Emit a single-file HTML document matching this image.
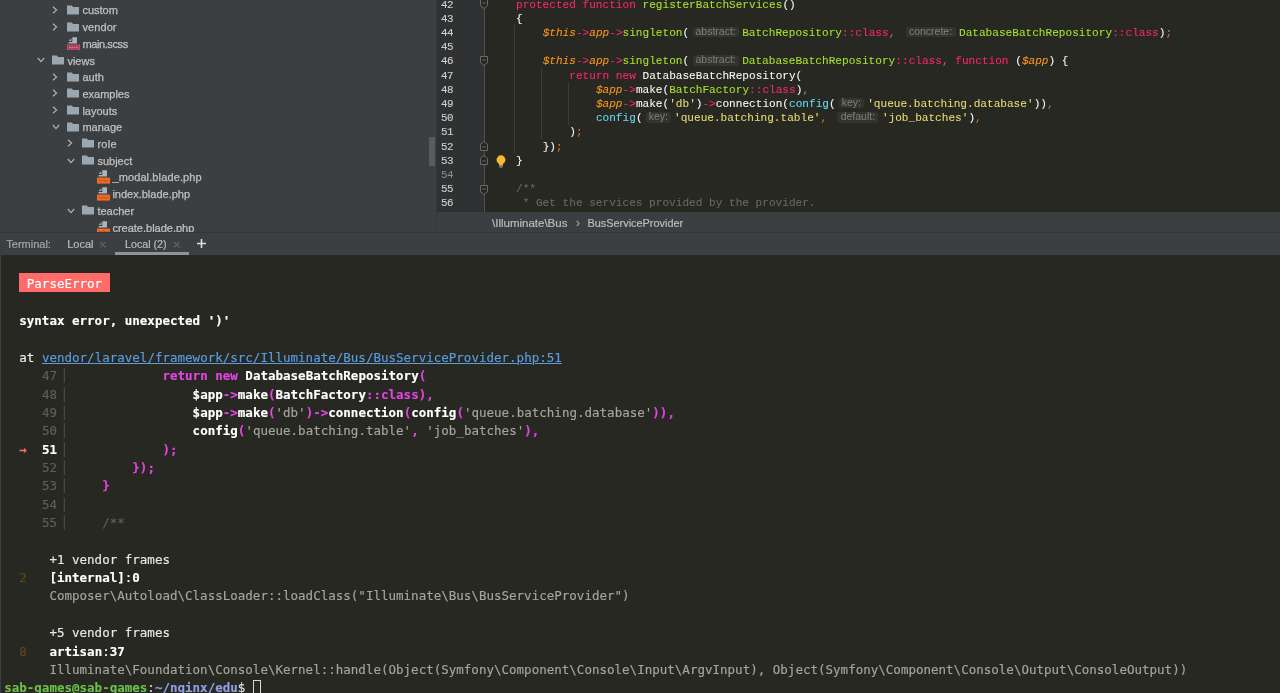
<!DOCTYPE html><html><head><meta charset="utf-8"><title>PhpStorm</title><style>
html,body{margin:0;padding:0;}
body{width:1280px;height:693px;overflow:hidden;position:relative;background:#272822;font-family:"Liberation Sans",sans-serif;}
.abs{position:absolute;}
#root{position:absolute;left:0;top:0;width:1280px;height:693px;will-change:transform;overflow:hidden;}
#sidebar{left:0;top:0;width:436px;height:232px;background:#3c3f41;overflow:hidden;}
.row{position:absolute;left:0;height:17px;line-height:17px;font-size:11px;color:#c0c0c0;white-space:nowrap;-webkit-text-stroke:0.25px #c0c0c0;}
.row span{position:absolute;top:1.2px;}
.ico{position:absolute;}
#editor{left:436px;top:0;width:844px;height:212px;background:#272822;overflow:hidden;}
#gutter{left:0;top:0;width:48px;height:212px;background:#303132;}
.ln{position:absolute;left:5.2px;width:14px;font-family:"Liberation Mono",monospace;font-size:11.8px;letter-spacing:-0.5px;transform:scaleX(0.92);transform-origin:0 0;color:#cfcfcb;-webkit-text-stroke:0.12px #cfcfcb;white-space:pre;line-height:14.2px;height:14.2px;}
.cl{position:absolute;left:0;font-family:"Liberation Mono",monospace;font-size:11.1px;white-space:pre;line-height:14.2px;height:14.2px;color:#f8f8f2;-webkit-text-stroke:0.08px;}
.cl span.t{position:absolute;top:0;}
.hint{position:absolute;top:0.9px;height:10.6px;line-height:9.4px;border-radius:3px;background:#33342e;color:#7c7d77;font-family:"Liberation Sans",sans-serif;font-size:10.5px;text-align:center;}
.k{color:#f92672}.g{color:#a6e22e}.o{color:#fd971f;font-style:italic}.w{color:#f8f8f2}.y{color:#e6db74}.c{color:#66d9ef}.p{color:#cc7832}.cm{color:#6d6a58}
#crumbs{left:436px;top:212px;width:844px;height:20px;background:#3c3f41;font-size:11px;color:#bbbbbb;}
#crumbs span{position:absolute;top:0.7px;line-height:20px;white-space:nowrap;-webkit-text-stroke:0.2px;}
#thead{left:0;top:232px;width:1280px;height:22.5px;background:#3c3f41;font-size:11px;color:#bbbbbb;border-top:1px solid #323537;box-sizing:border-box;}
#thead span{position:absolute;top:0.7px;line-height:21px;white-space:nowrap;-webkit-text-stroke:0.2px;}
#term{left:0;top:254.5px;width:1280px;height:438.5px;background:#272822;overflow:hidden;}
.tl{position:absolute;left:4.2px;font-family:"DejaVu Sans Mono","Liberation Mono",monospace;font-size:12.5px;letter-spacing:0.0095px;-webkit-text-stroke:0.15px;line-height:18.36px;height:18.36px;white-space:pre;color:#dcdcdc;}
.tl b{font-weight:bold;}
.m{color:#e345e3;font-weight:bold}.tw{color:#ffffff;font-weight:bold}.dim{color:#5f5f5a}.dv{color:#4d4d49}.gr{color:#a5a5a0}
</style></head><body><div id="root">
<div id="sidebar" class="abs">
<div class="row" style="top:1.3px">
<svg class="ico" style="left:52.4px;top:4.6px" width="6" height="8" viewBox="0 0 6 8"><path d="M1 0.8L4.6 4L1 7.2" fill="none" stroke="#afb1b3" stroke-width="1.2"/></svg>
<svg class="ico" style="left:66.8px;top:3.5px" width="12" height="10" viewBox="0 0 12 10"><path d="M0 0.4h4.8l1.3 1.5h5.9v7.5H0z" fill="#9aa7b0"/></svg>
<span style="left:82.4px;letter-spacing:0px">custom</span>
</div>
<div class="row" style="top:18px">
<svg class="ico" style="left:52.4px;top:4.6px" width="6" height="8" viewBox="0 0 6 8"><path d="M1 0.8L4.6 4L1 7.2" fill="none" stroke="#afb1b3" stroke-width="1.2"/></svg>
<svg class="ico" style="left:66.8px;top:3.5px" width="12" height="10" viewBox="0 0 12 10"><path d="M0 0.4h4.8l1.3 1.5h5.9v7.5H0z" fill="#9aa7b0"/></svg>
<span style="left:82.4px;letter-spacing:0.1px">vendor</span>
</div>
<div class="row" style="top:34.7px">
<svg class="ico" style="left:66.7px;top:2.2px" width="13.2" height="13.6" viewBox="0 0 13.2 13.6"><path d="M5.3 0.3H10V6.6H1.6V5H5.3z" fill="#a9b5bd"/><path d="M1.7 4L4.4 1.2V4z" fill="#a9b5bd"/><rect x="0" y="7.6" width="13" height="5.8" fill="#c8607a"/><rect x="0.8" y="8.4" width="11.4" height="4.2" fill="#a8324f"/><path d="M2 10.5H11" stroke="#d98a9c" stroke-width="1.6" stroke-dasharray="1.6 0.8"/></svg>
<span style="left:82.4px;letter-spacing:-0.39px">main.scss</span>
</div>
<div class="row" style="top:51.4px">
<svg class="ico" style="left:36.5px;top:6px" width="8" height="6" viewBox="0 0 8 6"><path d="M0.8 1L4 4.6L7.2 1" fill="none" stroke="#afb1b3" stroke-width="1.2"/></svg>
<svg class="ico" style="left:51.8px;top:3.5px" width="12" height="10" viewBox="0 0 12 10"><path d="M0 0.4h4.8l1.3 1.5h5.9v7.5H0z" fill="#9aa7b0"/></svg>
<span style="left:67.4px;letter-spacing:0px">views</span>
</div>
<div class="row" style="top:68.1px">
<svg class="ico" style="left:52.4px;top:4.6px" width="6" height="8" viewBox="0 0 6 8"><path d="M1 0.8L4.6 4L1 7.2" fill="none" stroke="#afb1b3" stroke-width="1.2"/></svg>
<svg class="ico" style="left:66.8px;top:3.5px" width="12" height="10" viewBox="0 0 12 10"><path d="M0 0.4h4.8l1.3 1.5h5.9v7.5H0z" fill="#9aa7b0"/></svg>
<span style="left:82.4px;letter-spacing:0px">auth</span>
</div>
<div class="row" style="top:84.8px">
<svg class="ico" style="left:52.4px;top:4.6px" width="6" height="8" viewBox="0 0 6 8"><path d="M1 0.8L4.6 4L1 7.2" fill="none" stroke="#afb1b3" stroke-width="1.2"/></svg>
<svg class="ico" style="left:66.8px;top:3.5px" width="12" height="10" viewBox="0 0 12 10"><path d="M0 0.4h4.8l1.3 1.5h5.9v7.5H0z" fill="#9aa7b0"/></svg>
<span style="left:82.4px;letter-spacing:0px">examples</span>
</div>
<div class="row" style="top:101.5px">
<svg class="ico" style="left:52.4px;top:4.6px" width="6" height="8" viewBox="0 0 6 8"><path d="M1 0.8L4.6 4L1 7.2" fill="none" stroke="#afb1b3" stroke-width="1.2"/></svg>
<svg class="ico" style="left:66.8px;top:3.5px" width="12" height="10" viewBox="0 0 12 10"><path d="M0 0.4h4.8l1.3 1.5h5.9v7.5H0z" fill="#9aa7b0"/></svg>
<span style="left:82.4px;letter-spacing:0px">layouts</span>
</div>
<div class="row" style="top:118.2px">
<svg class="ico" style="left:51.5px;top:6px" width="8" height="6" viewBox="0 0 8 6"><path d="M0.8 1L4 4.6L7.2 1" fill="none" stroke="#afb1b3" stroke-width="1.2"/></svg>
<svg class="ico" style="left:66.8px;top:3.5px" width="12" height="10" viewBox="0 0 12 10"><path d="M0 0.4h4.8l1.3 1.5h5.9v7.5H0z" fill="#9aa7b0"/></svg>
<span style="left:82.4px;letter-spacing:0px">manage</span>
</div>
<div class="row" style="top:134.9px">
<svg class="ico" style="left:67.4px;top:4.6px" width="6" height="8" viewBox="0 0 6 8"><path d="M1 0.8L4.6 4L1 7.2" fill="none" stroke="#afb1b3" stroke-width="1.2"/></svg>
<svg class="ico" style="left:81.8px;top:3.5px" width="12" height="10" viewBox="0 0 12 10"><path d="M0 0.4h4.8l1.3 1.5h5.9v7.5H0z" fill="#9aa7b0"/></svg>
<span style="left:97.4px;letter-spacing:0.3px">role</span>
</div>
<div class="row" style="top:151.6px">
<svg class="ico" style="left:66.5px;top:6px" width="8" height="6" viewBox="0 0 8 6"><path d="M0.8 1L4 4.6L7.2 1" fill="none" stroke="#afb1b3" stroke-width="1.2"/></svg>
<svg class="ico" style="left:81.8px;top:3.5px" width="12" height="10" viewBox="0 0 12 10"><path d="M0 0.4h4.8l1.3 1.5h5.9v7.5H0z" fill="#9aa7b0"/></svg>
<span style="left:97.4px;letter-spacing:0px">subject</span>
</div>
<div class="row" style="top:168.3px">
<svg class="ico" style="left:96.7px;top:2.2px" width="13.2" height="13.6" viewBox="0 0 13.2 13.6"><path d="M5.3 0.3H10V6.6H1.6V5H5.3z" fill="#a9b5bd"/><path d="M1.7 4L4.4 1.2V4z" fill="#a9b5bd"/><rect x="0" y="7.6" width="13.2" height="6" fill="#f26b24"/><path d="M1.5 9.6l3 1.8l2-1.6l3 1.6l2-1.4" fill="none" stroke="#b8431a" stroke-width="0.9"/></svg>
<span style="left:112.4px;letter-spacing:0.12px">_modal.blade.php</span>
</div>
<div class="row" style="top:185px">
<svg class="ico" style="left:96.7px;top:2.2px" width="13.2" height="13.6" viewBox="0 0 13.2 13.6"><path d="M5.3 0.3H10V6.6H1.6V5H5.3z" fill="#a9b5bd"/><path d="M1.7 4L4.4 1.2V4z" fill="#a9b5bd"/><rect x="0" y="7.6" width="13.2" height="6" fill="#f26b24"/><path d="M1.5 9.6l3 1.8l2-1.6l3 1.6l2-1.4" fill="none" stroke="#b8431a" stroke-width="0.9"/></svg>
<span style="left:112.4px;letter-spacing:0px">index.blade.php</span>
</div>
<div class="row" style="top:201.7px">
<svg class="ico" style="left:66.5px;top:6px" width="8" height="6" viewBox="0 0 8 6"><path d="M0.8 1L4 4.6L7.2 1" fill="none" stroke="#afb1b3" stroke-width="1.2"/></svg>
<svg class="ico" style="left:81.8px;top:3.5px" width="12" height="10" viewBox="0 0 12 10"><path d="M0 0.4h4.8l1.3 1.5h5.9v7.5H0z" fill="#9aa7b0"/></svg>
<span style="left:97.4px;letter-spacing:0px">teacher</span>
</div>
<div class="row" style="top:218.4px">
<svg class="ico" style="left:96.7px;top:2.2px" width="13.2" height="13.6" viewBox="0 0 13.2 13.6"><path d="M5.3 0.3H10V6.6H1.6V5H5.3z" fill="#a9b5bd"/><path d="M1.7 4L4.4 1.2V4z" fill="#a9b5bd"/><rect x="0" y="7.6" width="13.2" height="6" fill="#f26b24"/><path d="M1.5 9.6l3 1.8l2-1.6l3 1.6l2-1.4" fill="none" stroke="#b8431a" stroke-width="0.9"/></svg>
<span style="left:112.4px;letter-spacing:0px">create.blade.php</span>
</div>
<div class="abs" style="left:429px;top:137px;width:6px;height:29px;background:#595b5d;"></div>
</div>
<div id="editor" class="abs">
<div id="gutter" class="abs"></div>
<div class="abs" style="left:48px;top:0;width:1px;height:212px;background:#50514c;"></div>
<div class="abs" style="left:78px;top:25px;width:1px;height:128px;background:#3c3d38;"></div>
<div class="abs" style="left:105px;top:68px;width:1px;height:71px;background:#3c3d38;"></div>
<div class="abs" style="left:132px;top:82px;width:1px;height:43px;background:#3c3d38;"></div>
<div class="ln" style="top:-2.4px">42</div>
<div class="ln" style="top:11.793px">43</div>
<div class="ln" style="top:25.986px">44</div>
<div class="ln" style="top:40.179px">45</div>
<div class="ln" style="top:54.372px">46</div>
<div class="ln" style="top:68.565px">47</div>
<div class="ln" style="top:82.758px">48</div>
<div class="ln" style="top:96.951px">49</div>
<div class="ln" style="top:111.144px">50</div>
<div class="ln" style="top:125.337px">51</div>
<div class="ln" style="top:139.53px">52</div>
<div class="ln" style="top:153.723px">53</div>
<div class="ln" style="top:167.916px;color:#8e8f89;-webkit-text-stroke:0">54</div>
<div class="ln" style="top:182.109px">55</div>
<div class="ln" style="top:196.302px">56</div>
<div class="cl" style="top:-2.4px">
<span class="t k" style="left:80px;letter-spacing:-0.0011px">protected function </span>
<span class="t g" style="left:206.54px;letter-spacing:-0.0011px">registerBatchServices</span>
<span class="t w" style="left:346.4px;letter-spacing:-0.0011px">()</span>
</div>
<div class="cl" style="top:11.793px">
<span class="t w" style="left:80px;letter-spacing:-0.0011px">{</span>
</div>
<div class="cl" style="top:25.986px">
<span class="t o" style="left:106.64px;letter-spacing:-0.0011px">$this</span>
<span class="t k" style="left:139.94px;letter-spacing:-0.0011px">-&gt;</span>
<span class="t o" style="left:153.26px;letter-spacing:-0.0011px">app</span>
<span class="t k" style="left:173.24px;letter-spacing:-0.0011px">-&gt;</span>
<span class="t g" style="left:186.56px;letter-spacing:-0.0011px">singleton</span>
<span class="t w" style="left:246.5px;letter-spacing:-0.0011px">(</span>
<span class="hint" style="left:256.66px;width:46px">abstract:</span>
<span class="t g" style="left:306.16px;letter-spacing:-0.0011px">BatchRepository</span>
<span class="t k" style="left:406.06px;letter-spacing:-0.0011px">::class</span>
<span class="t p" style="left:452.68px;letter-spacing:-0.0011px">, </span>
<span class="hint" style="left:469.5px;width:50px">concrete:</span>
<span class="t g" style="left:523px;letter-spacing:-0.0011px">DatabaseBatchRepository</span>
<span class="t k" style="left:676.18px;letter-spacing:-0.0011px">::class</span>
<span class="t w" style="left:722.8px;letter-spacing:-0.0011px">)</span>
<span class="t p" style="left:729.46px;letter-spacing:-0.0011px">;</span>
</div>
<div class="cl" style="top:54.372px">
<span class="t o" style="left:106.64px;letter-spacing:-0.0011px">$this</span>
<span class="t k" style="left:139.94px;letter-spacing:-0.0011px">-&gt;</span>
<span class="t o" style="left:153.26px;letter-spacing:-0.0011px">app</span>
<span class="t k" style="left:173.24px;letter-spacing:-0.0011px">-&gt;</span>
<span class="t g" style="left:186.56px;letter-spacing:-0.0011px">singleton</span>
<span class="t w" style="left:246.5px;letter-spacing:-0.0011px">(</span>
<span class="hint" style="left:256.66px;width:46px">abstract:</span>
<span class="t g" style="left:306.16px;letter-spacing:-0.0011px">DatabaseBatchRepository</span>
<span class="t k" style="left:459.34px;letter-spacing:-0.0011px">::class</span>
<span class="t p" style="left:505.96px;letter-spacing:-0.0011px">, </span>
<span class="t k" style="left:519.28px;letter-spacing:-0.0011px">function </span>
<span class="t w" style="left:579.22px;letter-spacing:-0.0011px">(</span>
<span class="t o" style="left:585.88px;letter-spacing:-0.0011px">$app</span>
<span class="t w" style="left:612.52px;letter-spacing:-0.0011px">) {</span>
</div>
<div class="cl" style="top:68.565px">
<span class="t k" style="left:133.28px;letter-spacing:-0.0011px">return new </span>
<span class="t w" style="left:206.54px;letter-spacing:-0.0011px">DatabaseBatchRepository(</span>
</div>
<div class="cl" style="top:82.758px">
<span class="t o" style="left:159.92px;letter-spacing:-0.0011px">$app</span>
<span class="t k" style="left:186.56px;letter-spacing:-0.0011px">-&gt;</span>
<span class="t w" style="left:199.88px;letter-spacing:-0.0011px">make(</span>
<span class="t g" style="left:233.18px;letter-spacing:-0.0011px">BatchFactory</span>
<span class="t k" style="left:313.1px;letter-spacing:-0.0011px">::class</span>
<span class="t w" style="left:359.72px;letter-spacing:-0.0011px">)</span>
<span class="t p" style="left:366.38px;letter-spacing:-0.0011px">,</span>
</div>
<div class="cl" style="top:96.951px">
<span class="t o" style="left:159.92px;letter-spacing:-0.0011px">$app</span>
<span class="t k" style="left:186.56px;letter-spacing:-0.0011px">-&gt;</span>
<span class="t w" style="left:199.88px;letter-spacing:-0.0011px">make(</span>
<span class="t y" style="left:233.18px;letter-spacing:-0.0011px">&#x27;db&#x27;</span>
<span class="t w" style="left:259.82px;letter-spacing:-0.0011px">)</span>
<span class="t k" style="left:266.48px;letter-spacing:-0.0011px">-&gt;</span>
<span class="t w" style="left:279.8px;letter-spacing:-0.0011px">connection(</span>
<span class="t c" style="left:353.06px;letter-spacing:-0.0011px">config</span>
<span class="t w" style="left:393.02px;letter-spacing:-0.0011px">(</span>
<span class="hint" style="left:403.18px;width:24.5px">key:</span>
<span class="t y" style="left:431.18px;letter-spacing:-0.0011px">&#x27;queue.batching.database&#x27;</span>
<span class="t w" style="left:597.68px;letter-spacing:-0.0011px">))</span>
<span class="t p" style="left:611px;letter-spacing:-0.0011px">,</span>
</div>
<div class="cl" style="top:111.144px">
<span class="t c" style="left:159.92px;letter-spacing:-0.0011px">config</span>
<span class="t w" style="left:199.88px;letter-spacing:-0.0011px">(</span>
<span class="hint" style="left:210.04px;width:24.5px">key:</span>
<span class="t y" style="left:238.04px;letter-spacing:-0.0011px">&#x27;queue.batching.table&#x27;</span>
<span class="t p" style="left:384.56px;letter-spacing:-0.0011px">, </span>
<span class="hint" style="left:401.38px;width:41px">default:</span>
<span class="t y" style="left:445.88px;letter-spacing:-0.0011px">&#x27;job_batches&#x27;</span>
<span class="t w" style="left:532.46px;letter-spacing:-0.0011px">)</span>
<span class="t p" style="left:539.12px;letter-spacing:-0.0011px">,</span>
</div>
<div class="cl" style="top:125.337px">
<span class="t w" style="left:133.28px;letter-spacing:-0.0011px">)</span>
<span class="t p" style="left:139.94px;letter-spacing:-0.0011px">;</span>
</div>
<div class="cl" style="top:139.53px">
<span class="t w" style="left:106.64px;letter-spacing:-0.0011px">})</span>
<span class="t p" style="left:119.96px;letter-spacing:-0.0011px">;</span>
</div>
<div class="cl" style="top:153.723px">
<span class="t w" style="left:80px;letter-spacing:-0.0011px">}</span>
</div>
<div class="cl" style="top:182.109px">
<span class="t cm" style="left:80px;letter-spacing:-0.0011px">/**</span>
</div>
<div class="cl" style="top:196.302px">
<span class="t cm" style="left:80px;letter-spacing:-0.0011px"> * Get the services provided by the provider.</span>
</div>
<svg class="abs" style="left:44px;top:-1px" width="8" height="10" viewBox="0 0 8 10"><path d="M0.5 0.5H7.5V6.6L4 9.5L0.5 6.6z" fill="#272822" stroke="#696a65" stroke-width="1"/><path d="M2.3 4H5.7" stroke="#696a65" stroke-width="1"/></svg>
<svg class="abs" style="left:44px;top:55.7px" width="8" height="10" viewBox="0 0 8 10"><path d="M0.5 0.5H7.5V6.6L4 9.5L0.5 6.6z" fill="#272822" stroke="#696a65" stroke-width="1"/><path d="M2.3 4H5.7" stroke="#696a65" stroke-width="1"/></svg>
<svg class="abs" style="left:44px;top:140.9px" width="8" height="10" viewBox="0 0 8 10"><path d="M0.5 9.5H7.5V3.4L4 0.5L0.5 3.4z" fill="#272822" stroke="#696a65" stroke-width="1"/><path d="M2.3 6H5.7" stroke="#696a65" stroke-width="1"/></svg>
<svg class="abs" style="left:44px;top:154.9px" width="8" height="10" viewBox="0 0 8 10"><path d="M0.5 9.5H7.5V3.4L4 0.5L0.5 3.4z" fill="#272822" stroke="#696a65" stroke-width="1"/><path d="M2.3 6H5.7" stroke="#696a65" stroke-width="1"/></svg>
<svg class="abs" style="left:44px;top:185.2px" width="8" height="10" viewBox="0 0 8 10"><path d="M0.5 0.5H7.5V6.6L4 9.5L0.5 6.6z" fill="#272822" stroke="#696a65" stroke-width="1"/><path d="M2.3 4H5.7" stroke="#696a65" stroke-width="1"/></svg>
<svg class="abs" style="left:59.7px;top:154.7px" width="10" height="13" viewBox="0 0 10 13"><circle cx="5" cy="4.8" r="4.45" fill="#fbb634"/><rect x="3" y="8.5" width="4" height="1.6" fill="#fbb634"/><rect x="3" y="10.3" width="4" height="1.2" fill="#9aa7b0"/><rect x="3.6" y="11.6" width="2.8" height="0.9" fill="#9aa7b0"/></svg>
</div>
<div id="crumbs" class="abs">
<span style="left:56px;font-size:11.5px">\Illuminate\Bus</span>
<span style="left:140px;font-size:12px;color:#a0a2a4">&#8250;</span>
<span style="left:151.5px;font-size:10.9px">BusServiceProvider</span>
</div>
<div id="thead" class="abs">
<span style="left:6.3px;color:#a4a6a8">Terminal:</span>
<span style="left:67.2px">Local</span>
<span style="left:99px;color:#626567;font-size:13px">&#215;</span>
<span style="left:125px;font-size:10.7px">Local (2)</span>
<span style="left:173px;color:#626567;font-size:13px">&#215;</span>
<svg class="abs" style="left:197px;top:6px" width="9" height="9" viewBox="0 0 9 9"><path d="M4.5 0V9M0 4.5H9" stroke="#dcdcdc" stroke-width="1.6"/></svg>
<div class="abs" style="left:115px;top:19.3px;width:74px;height:2.7px;background:#8e9498;"></div>
</div>
<div id="term" class="abs">
<div class="abs" style="left:18.8px;top:18.75px;width:91px;height:18.7px;background:#ff6b68"></div>
<div class="tl" style="top:20.85px">   <span style="color:#fff">ParseError</span></div>
<div class="tl" style="top:57.57px">  <span class="tw">syntax error, unexpected &#x27;)&#x27;</span></div>
<div class="tl" style="top:94.29px">  <span style="color:#f0f0f0">at</span> <span style="color:#5c9ce0;text-decoration:underline">vendor/laravel/framework/src/Illuminate/Bus/BusServiceProvider.php:51</span></div>
<div class="tl" style="top:112.65px">     <span class="dim">47</span><span class="dv">▕</span>             <span class="m">return new </span><span class="tw">DatabaseBatchRepository</span><span class="m">(</span></div>
<div class="tl" style="top:131.01px">     <span class="dim">48</span><span class="dv">▕</span>                 <span class="tw">$app</span><span class="m">-&gt;</span><span class="tw">make</span><span class="m">(</span><span class="tw">BatchFactory</span><span class="m">::class),</span></div>
<div class="tl" style="top:149.37px">     <span class="dim">49</span><span class="dv">▕</span>                 <span class="tw">$app</span><span class="m">-&gt;</span><span class="tw">make</span><span class="m">(</span><span class="gr">&#x27;db&#x27;</span><span class="m">)-&gt;</span><span class="tw">connection</span><span class="m">(</span><span class="tw">config</span><span class="m">(</span><span class="gr">&#x27;queue.batching.database&#x27;</span><span class="m">)),</span></div>
<div class="tl" style="top:167.73px">     <span class="dim">50</span><span class="dv">▕</span>                 <span class="tw">config</span><span class="m">(</span><span class="gr">&#x27;queue.batching.table&#x27;</span><span class="m">,</span> <span class="gr">&#x27;job_batches&#x27;</span><span class="m">),</span></div>
<div class="tl" style="top:186.09px">  <span style="color:#ff6b68;font-weight:bold">→</span>  <span class="tw">51</span><span class="dv">▕</span>             <span class="m">);</span></div>
<div class="tl" style="top:204.45px">     <span class="dim">52</span><span class="dv">▕</span>         <span class="m">});</span></div>
<div class="tl" style="top:222.81px">     <span class="dim">53</span><span class="dv">▕</span>     <span class="m">}</span></div>
<div class="tl" style="top:241.17px">     <span class="dim">54</span><span class="dv">▕</span> </div>
<div class="tl" style="top:259.53px">     <span class="dim">55</span><span class="dv">▕</span>     <span class="dim">/**</span></div>
<div class="tl" style="top:296.25px">      <span style="color:#e8e8e8">+1 vendor frames</span></div>
<div class="tl" style="top:314.61px">  <span style="color:#62471e">2</span>   <span class="tw">[internal]</span><span style="color:#fff">:</span><span class="tw">0</span></div>
<div class="tl" style="top:332.97px">      <span class="gr">Composer\Autoload\ClassLoader::loadClass(&quot;Illuminate\Bus\BusServiceProvider&quot;)</span></div>
<div class="tl" style="top:369.69px">      <span style="color:#e8e8e8">+5 vendor frames</span></div>
<div class="tl" style="top:388.05px">  <span style="color:#62471e">8</span>   <span class="tw">artisan</span><span style="color:#fff">:</span><span class="tw">37</span></div>
<div class="tl" style="top:406.41px">      <span class="gr">Illuminate\Foundation\Console\Kernel::handle(Object(Symfony\Component\Console\Input\ArgvInput), Object(Symfony\Component\Console\Output\ConsoleOutput))</span></div>
<div class="tl" style="top:424.77px"><span style="color:#6cc04a;font-weight:bold">sab-games@sab-games</span><span style="color:#e0e0e0">:</span><span style="color:#8f9ee8;font-weight:bold">~/nginx/edu</span><span style="color:#e0e0e0">$ </span><span style="display:inline-block;width:8.3px;height:18px;border:1px solid #d8d8d8;box-sizing:border-box;vertical-align:-5.5px"></span></div>
</div>
<div class="abs" style="left:435.5px;top:0;width:1px;height:232px;background:#34373a;"></div>
<div class="abs" style="left:0;top:254px;width:1.3px;height:439px;background:#3c3f41;"></div>
</div></body></html>
